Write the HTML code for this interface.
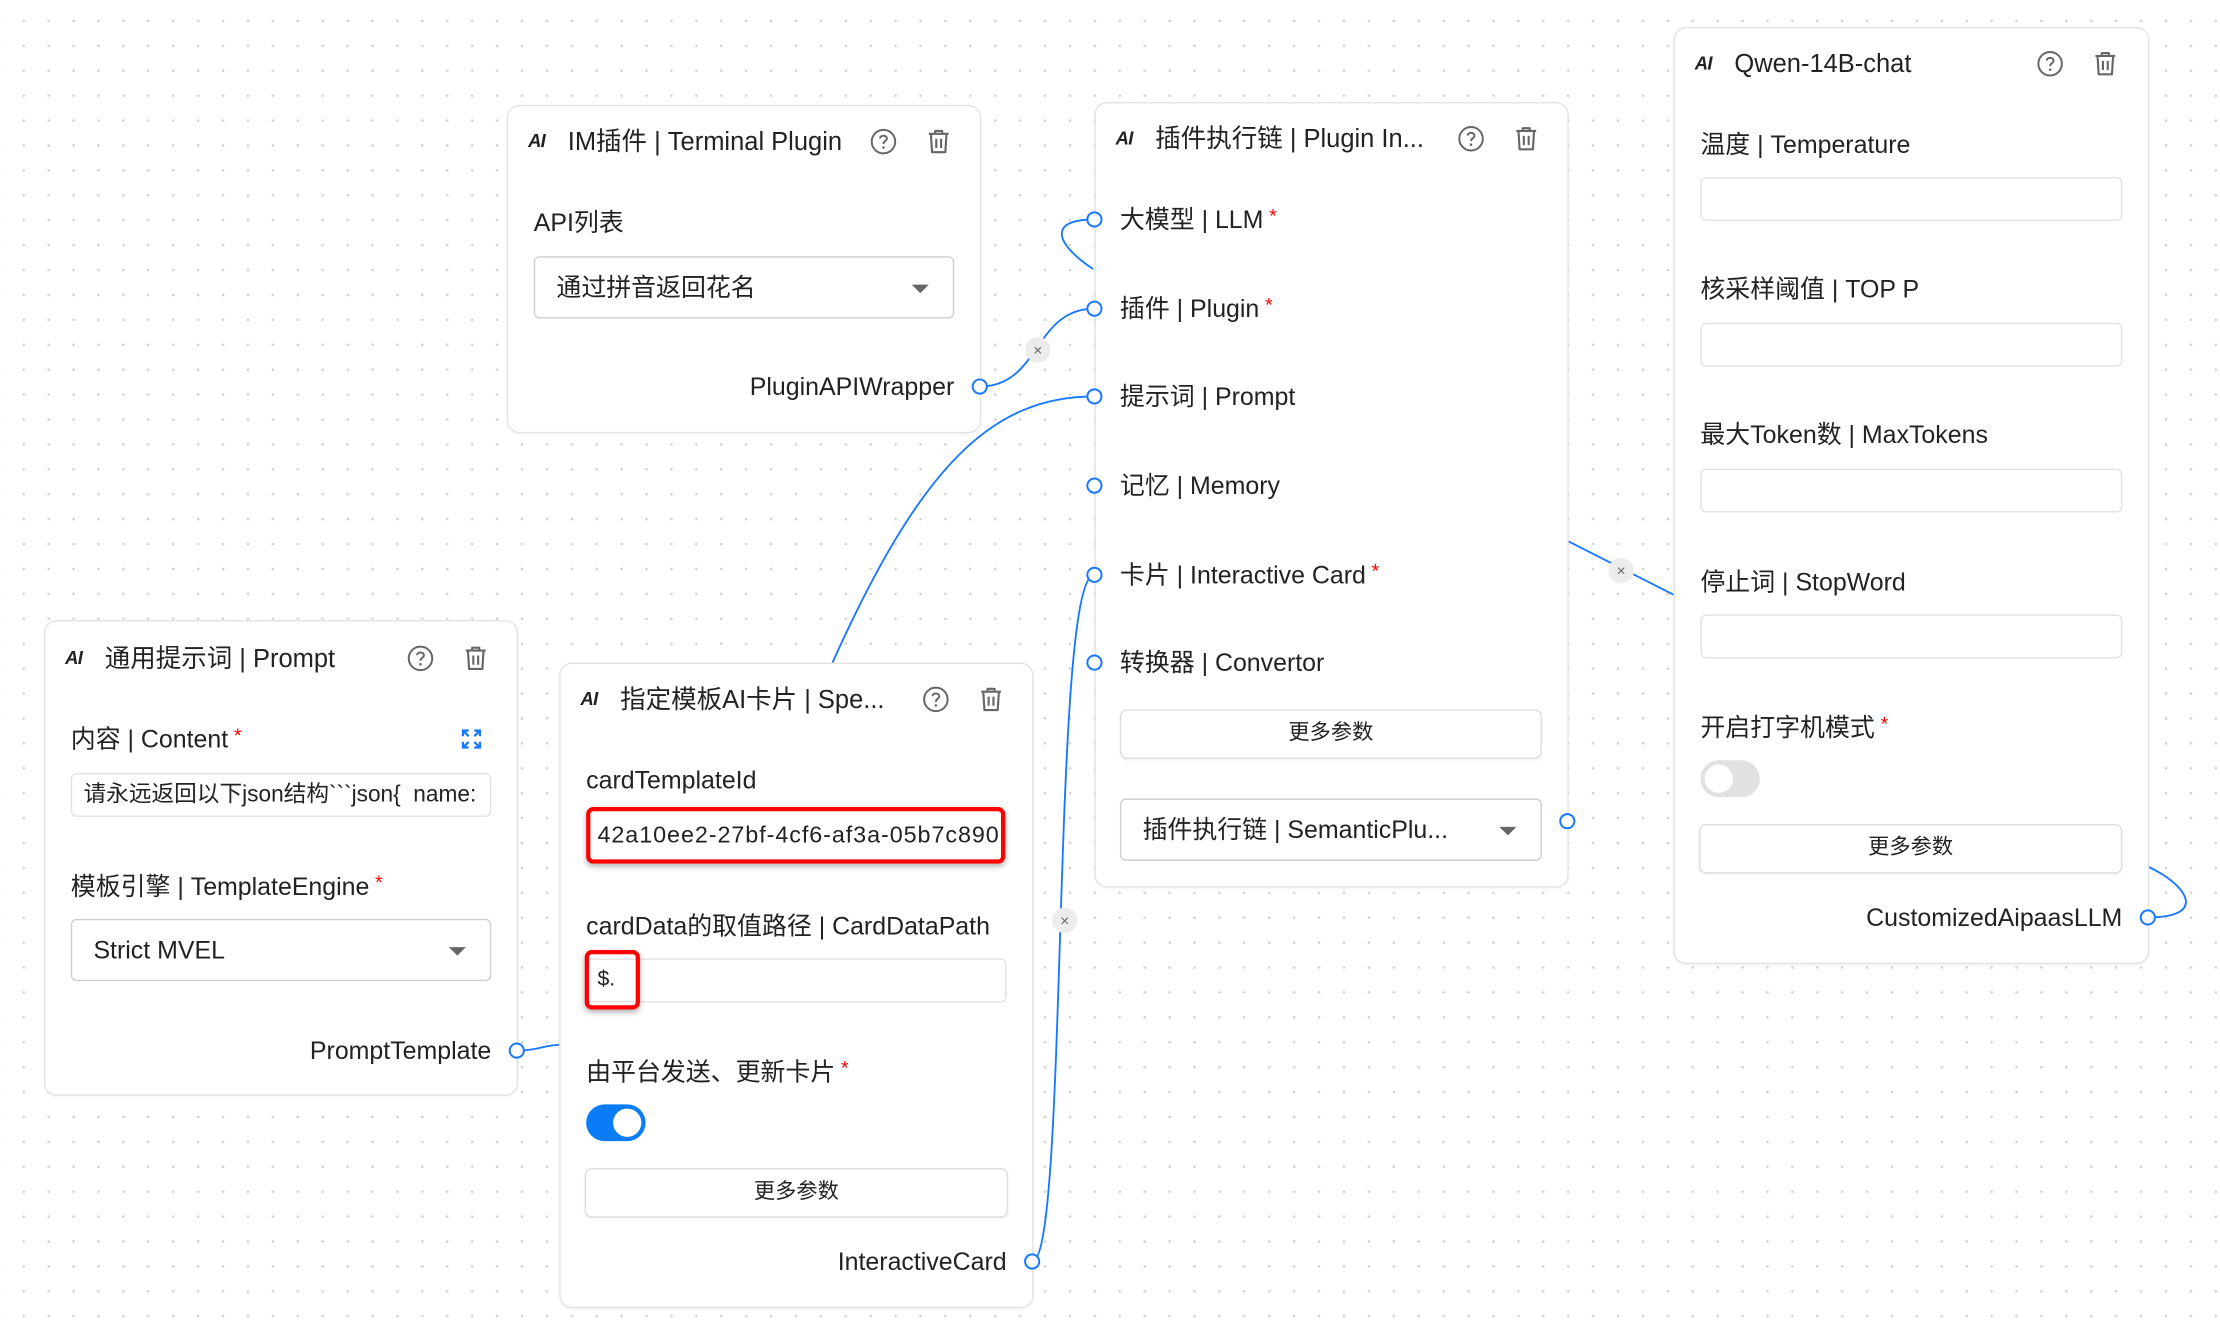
<!DOCTYPE html>
<html><head><meta charset="utf-8">
<style>
html,body{margin:0;padding:0;background:#fff;width:2220px;height:1332px;overflow:hidden}
#w{position:absolute;left:0;top:0;width:1568px;height:941px;transform:scale(1.41582);transform-origin:0 0;
background-image:radial-gradient(circle,#cfcfcf 0.7px,transparent 1.1px);background-size:17.6px 17.6px;background-position:8px 6px;
font-family:"Liberation Sans","Noto Sans CJK SC",sans-serif;color:#222}
.card{position:absolute;background:#fff;border:1px solid #e3e3e3;border-radius:9px;box-sizing:border-box;box-shadow:0 1px 2px rgba(0,0,0,.04)}
.t{position:absolute;height:24px;line-height:24px;font-size:17.6px;white-space:nowrap}
.ti{font-size:18px}
.ai{position:absolute;font-size:13px;font-style:italic;font-weight:bold;height:20px;line-height:20px;letter-spacing:-.5px}
.r{text-align:right}
.star{color:#f00;font-size:14px;position:relative;top:-4px;margin-left:4px}
.box{position:absolute;border:1px solid #e2e2e2;border-radius:4px;box-sizing:border-box;background:#fff}
.sel{position:absolute;border:1px solid #cfcfcf;border-radius:4px;box-sizing:border-box;background:#fff;font-size:17.6px;line-height:42px;padding-left:15px;white-space:nowrap}
.sel:after{content:"";position:absolute;right:17px;top:19px;border-left:6px solid transparent;border-right:6px solid transparent;border-top:6px solid #666}
.btn{position:absolute;border:1px solid #dedede;border-radius:5px;box-sizing:border-box;background:#fff;text-align:center;font-size:15px;line-height:32px;box-shadow:0 1px 2px rgba(0,0,0,.05)}
.ic{position:absolute;width:20px;height:20px}
svg.lines{position:absolute;left:0;top:0}
.red{position:absolute;border:3px solid #f00;border-radius:5px;box-sizing:border-box;box-shadow:0 2px 4px rgba(0,0,0,.3)}
</style></head><body><div id="w">

<svg class="lines" width="1568" height="941" viewBox="0 0 1568 941">
<g fill="none" stroke="#1677ff" stroke-width="1.3">
<path d="M773,155 C740,155 745,172 772,190"/>
<path d="M692,273 C735,273 730,218 773,218"/>
<path d="M588,468 C650,330 700,280 773,280"/>
<path d="M729,891 C755,891 742,406 773,406"/>
<path d="M1107,382 L1182,420"/>
<path d="M1517,648 C1560,648 1545,625 1517,612"/>
<path d="M365,742 C380,742 385,738 395,738"/>
</g>
<g fill="#ececec"><circle cx="733" cy="247" r="9"/><circle cx="752" cy="650" r="9"/><circle cx="1145" cy="403" r="9"/></g>
<g fill="#666" font-size="11" font-family="Liberation Sans" text-anchor="middle"><text x="733" y="251">×</text><text x="752" y="654">×</text><text x="1145" y="407">×</text></g>
</svg>

<svg width="0" height="0" style="position:absolute">
<defs>
<symbol id="q" viewBox="0 0 20 20"><circle cx="10" cy="10" r="8.3" fill="none" stroke="#666" stroke-width="1.4"/><path d="M7.6,7.8 C7.6,5.2 12.4,5.2 12.4,7.8 C12.4,9.6 10,9.6 10,11.7" fill="none" stroke="#666" stroke-width="1.4"/><circle cx="10" cy="14.2" r="0.9" fill="#666"/></symbol>
<symbol id="tr" viewBox="0 0 20 20"><path d="M3,4.5 H17 M7.5,4.5 V2.5 H12.5 V4.5 M4.5,4.5 L5.3,17.5 H14.7 L15.5,4.5 M8.3,8 V14.5 M11.7,8 V14.5" fill="none" stroke="#666" stroke-width="1.5" stroke-linejoin="round"/></symbol>
</defs></svg>

<!-- Card A -->
<div class="card" style="left:358px;top:74px;width:335px;height:232px"></div>
<div class="ai" style="left:373px;top:90px">AI</div>
<div class="t ti" style="left:401px;top:88px">IM插件 | Terminal Plugin</div>
<svg class="ic" style="left:614px;top:90px"><use href="#q"/></svg>
<svg class="ic" style="left:653px;top:90px"><use href="#tr"/></svg>
<div class="t" style="left:377px;top:145px">API列表</div>
<div class="sel" style="left:377px;top:181px;width:297px;height:44px">通过拼音返回花名</div>
<div class="t r" style="left:474px;top:261px;width:200px">PluginAPIWrapper</div>

<!-- Card B -->
<div class="card" style="left:773px;top:72px;width:335px;height:555px"></div>
<div class="ai" style="left:788px;top:88px">AI</div>
<div class="t ti" style="left:816px;top:86px">插件执行链 | Plugin In...</div>
<svg class="ic" style="left:1029px;top:88px"><use href="#q"/></svg>
<svg class="ic" style="left:1068px;top:88px"><use href="#tr"/></svg>
<div class="t" style="left:791px;top:143px">大模型 | LLM<span class="star">*</span></div>
<div class="t" style="left:791px;top:206px">插件 | Plugin<span class="star">*</span></div>
<div class="t" style="left:791px;top:268px">提示词 | Prompt</div>
<div class="t" style="left:791px;top:331px">记忆 | Memory</div>
<div class="t" style="left:791px;top:394px">卡片 | Interactive Card<span class="star">*</span></div>
<div class="t" style="left:791px;top:456px">转换器 | Convertor</div>
<div class="btn" style="left:791px;top:501px;width:298px;height:35px">更多参数</div>
<div class="sel" style="left:791px;top:564px;width:298px;height:44px">插件执行链 | SemanticPlu...</div>

<!-- Card C -->
<div class="card" style="left:1182px;top:19px;width:336px;height:662px"></div>
<div class="ai" style="left:1197px;top:35px">AI</div>
<div class="t ti" style="left:1225px;top:33px">Qwen-14B-chat</div>
<svg class="ic" style="left:1438px;top:35px"><use href="#q"/></svg>
<svg class="ic" style="left:1477px;top:35px"><use href="#tr"/></svg>
<div class="t" style="left:1201px;top:90px">温度 | Temperature</div>
<div class="box" style="left:1201px;top:125px;width:298px;height:31px"></div>
<div class="t" style="left:1201px;top:192px">核采样阈值 | TOP P</div>
<div class="box" style="left:1201px;top:228px;width:298px;height:31px"></div>
<div class="t" style="left:1201px;top:295px">最大Token数 | MaxTokens</div>
<div class="box" style="left:1201px;top:331px;width:298px;height:31px"></div>
<div class="t" style="left:1201px;top:399px">停止词 | StopWord</div>
<div class="box" style="left:1201px;top:434px;width:298px;height:31px"></div>
<div class="t" style="left:1201px;top:502px">开启打字机模式<span class="star">*</span></div>
<div style="position:absolute;left:1201px;top:537px;width:42px;height:26px;border-radius:13px;background:#e0e1e3"><div style="position:absolute;left:3px;top:3px;width:20px;height:20px;border-radius:50%;background:#fff"></div></div>
<div class="btn" style="left:1200px;top:582px;width:299px;height:35px">更多参数</div>
<div class="t r" style="left:1250px;top:636px;width:249px">CustomizedAipaasLLM</div>

<!-- Card D -->
<div class="card" style="left:31px;top:438px;width:335px;height:336px"></div>
<div class="ai" style="left:46px;top:455px">AI</div>
<div class="t ti" style="left:74px;top:453px">通用提示词 | Prompt</div>
<svg class="ic" style="left:287px;top:455px"><use href="#q"/></svg>
<svg class="ic" style="left:326px;top:455px"><use href="#tr"/></svg>
<div class="t" style="left:50px;top:510px">内容 | Content<span class="star">*</span></div>
<svg style="position:absolute;left:326px;top:515px" width="14" height="14" viewBox="0 0 14 14" fill="none" stroke="#1677ff" stroke-width="1.6"><path d="M1,5 V1 H5 M1,1 L5,5 M9,1 H13 V5 M13,1 L9,5 M1,9 V13 H5 M1,13 L5,9 M13,9 V13 H9 M13,13 L9,9"/></svg>
<div class="box" style="left:50px;top:546px;width:297px;height:31px;overflow:hidden;font-size:16px;line-height:29px;padding-left:8px;white-space:nowrap">请永远返回以下json结构&#96;&#96;&#96;json{&nbsp; name:</div>
<div class="t" style="left:50px;top:614px">模板引擎 | TemplateEngine<span class="star">*</span></div>
<div class="sel" style="left:50px;top:649px;width:297px;height:44px">Strict MVEL</div>
<div class="t r" style="left:147px;top:730px;width:200px">PromptTemplate</div>

<!-- Card E -->
<div class="card" style="left:395px;top:468px;width:335px;height:456px"></div>
<div class="ai" style="left:410px;top:484px">AI</div>
<div class="t ti" style="left:438px;top:482px">指定模板AI卡片 | Spe...</div>
<svg class="ic" style="left:651px;top:484px"><use href="#q"/></svg>
<svg class="ic" style="left:690px;top:484px"><use href="#tr"/></svg>
<div class="t" style="left:414px;top:539px">cardTemplateId</div>
<div class="red" style="left:414px;top:570px;width:296px;height:40px"></div>
<div class="t" style="left:422px;top:578px;font-size:16.5px;letter-spacing:.65px">42a10ee2-27bf-4cf6-af3a-05b7c890</div>
<div class="t" style="left:414px;top:642px">cardData的取值路径 | CardDataPath</div>
<div class="box" style="left:414px;top:677px;width:297px;height:31px"></div>
<div class="red" style="left:413px;top:671px;width:39px;height:42px"></div>
<div class="t" style="left:422px;top:680px;font-size:15px">$.</div>
<div class="t" style="left:414px;top:745px">由平台发送、更新卡片<span class="star">*</span></div>
<div style="position:absolute;left:414px;top:780px;width:42px;height:26px;border-radius:13px;background:#0a7cf5"><div style="position:absolute;left:19px;top:3px;width:20px;height:20px;border-radius:50%;background:#fff"></div></div>
<div class="btn" style="left:413px;top:825px;width:299px;height:35px">更多参数</div>
<div class="t r" style="left:510px;top:879px;width:201px">InteractiveCard</div>

<svg class="lines" width="1568" height="941" viewBox="0 0 1568 941">
<g fill="#fff" stroke="#1677ff" stroke-width="1.4">
<circle cx="692" cy="273" r="5"/>
<circle cx="773" cy="155" r="5"/><circle cx="773" cy="218" r="5"/><circle cx="773" cy="280" r="5"/>
<circle cx="773" cy="343" r="5"/><circle cx="773" cy="406" r="5"/><circle cx="773" cy="468" r="5"/>
<circle cx="1107" cy="580" r="5"/>
<circle cx="1517" cy="648" r="5"/>
<circle cx="365" cy="742" r="5"/>
<circle cx="729" cy="891" r="5"/>
</g></svg>

</div></body></html>
